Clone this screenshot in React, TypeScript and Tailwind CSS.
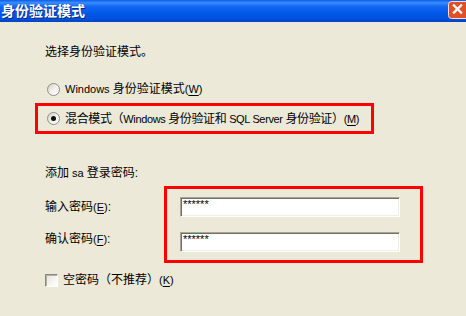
import React from "react";

const font = { fontFamily: '"Liberation Sans", "Noto Sans CJK SC", sans-serif' };

function Key({ k }: { k: string }) {
  return (
    <span className="text-[11px]">
      (<span className="underline underline-offset-2">{k}</span>)
    </span>
  );
}

function L({ children }: { children: React.ReactNode }) {
  return <span className="text-[11px]">{children}</span>;
}

function Radio({ checked }: { checked?: boolean }) {
  return (
    <span className="relative flex h-[13px] w-[13px] shrink-0 items-center justify-center rounded-full border border-[#8f8f88] bg-[linear-gradient(135deg,#d4d2c6_0%,#f4f3ee_55%,#ffffff_100%)]">
      {checked && <span className="h-[5px] w-[5px] rounded-full bg-[#101010]" />}
    </span>
  );
}

function PasswordBox() {
  return (
    <div className="h-[20px] w-[220px] border border-t-[#a8a598] border-l-[#a8a598] border-b-white border-r-white bg-white pl-[2px] pt-[1px] text-[11px] leading-[11px] text-black shadow-[inset_1px_1px_0_#716f64,inset_-1px_-1px_0_#f1efe2]">
      ******
    </div>
  );
}

function CloseButton() {
  return (
    <svg width="18" height="19" viewBox="0 0 18 19" className="mt-[1px] shrink-0">
      <rect x="0.5" y="0.5" width="21" height="17" rx="3" fill="#e04f26" stroke="#f4e0d8" />
      <path d="M6 4.5 L13 11.5 M13 4.5 L6 11.5" stroke="#ffffff" strokeWidth="2.4" strokeLinecap="square" />
    </svg>
  );
}

export default function App() {
  return (
    <div className="h-[316px] w-[466px] overflow-hidden bg-[#ECE9D8] text-[12px] leading-[14px] text-black" style={font}>
      <div className="flex h-[22px] items-start justify-between bg-[linear-gradient(180deg,#0a5de8_0%,#3a8dff_12%,#1466f4_30%,#0058e8_60%,#0050dc_85%,#0044c4_100%)]">
        <span className="pl-[1px] pt-[2px] text-[14px] font-bold leading-[18px] text-white [text-shadow:1px_1px_0_#0a2a8a]">
          身份验证模式
        </span>
        <CloseButton />
      </div>

      <div className="flex flex-col pl-[45px]">
        <div className="mt-[23px]">选择身份验证模式。</div>

        <div className="mt-[23px] flex items-center gap-[5px] pl-[2px]">
          <Radio />
          <span className="whitespace-nowrap">
            <L>Windows </L>身份验证模式<Key k="W" />
          </span>
        </div>

        <div className="-ml-[10px] mt-[7px] flex h-[31px] w-[339px] items-center gap-[5px] border-[3px] border-[#ff0000] pl-[9px]">
          <Radio checked />
          <span className="whitespace-nowrap tracking-[-0.35px]">
            混合模式（<L>Windows </L>身份验证和<L> SQL Server </L>身份验证）<Key k="M" />
          </span>
        </div>

        <div className="mt-[32px]">
          添加<L> sa </L>登录密码:
        </div>

        <div className="mt-[6px] flex">
          <div className="flex w-[119px] flex-col">
            <div className="mt-[14px]">
              输入密码<Key k="E" />:
            </div>
            <div className="mt-[18px]">
              确认密码<Key k="F" />:
            </div>
          </div>
          <div className="flex h-[77px] w-[259px] flex-col border-[3px] border-[#ff0000] pl-[13px] pt-[8px]">
            <PasswordBox />
            <div className="mt-[15px]">
              <PasswordBox />
            </div>
          </div>
        </div>

        <div className="mt-[10px] flex items-center gap-[5px]">
          <span className="h-[13px] w-[13px] shrink-0 border border-t-[#8a887d] border-l-[#8a887d] border-b-white border-r-white bg-[linear-gradient(135deg,#e4e2d8_0%,#f6f5f0_60%,#ffffff_100%)] shadow-[inset_1px_1px_0_#b4b2a6]" />
          <span>
            空密码（不推荐）<Key k="K" />
          </span>
        </div>
      </div>
    </div>
  );
}
